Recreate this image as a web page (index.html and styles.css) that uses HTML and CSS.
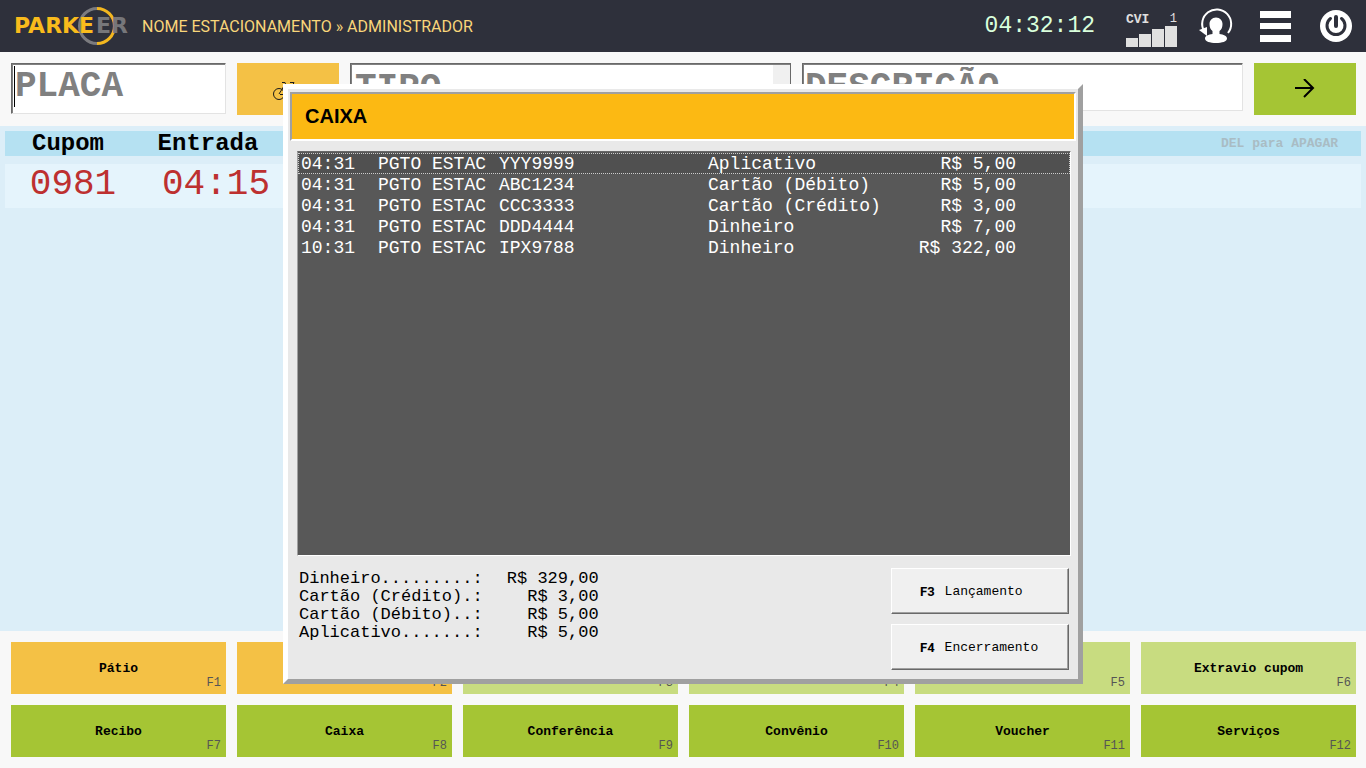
FILE: index.html
```html
<!DOCTYPE html>
<html lang="pt-BR">
<head>
<meta charset="utf-8">
<meta name="viewport" content="width=device-width, initial-scale=1">
<title>Parkeer - Caixa</title>
<link rel="stylesheet" href="styles.css">
</head>
<body>
<div class="app">
  <header class="topbar">
    <svg class="logo" width="120" height="40" viewBox="0 0 120 40" role="img" aria-label="Parkeer">
      <path class="ring-left" d="M85 2.500a17.500 17.500 0 0 0 0 35"/>
      <path class="ring-right" d="M85 2.500a17.500 17.500 0 0 1 0 35"/>
      <text class="logo-text" x="2" y="27">PARKE</text>
      <text class="logo-text logo-tail" x="84" y="27">ER</text>
    </svg>
    <h1 class="site">NOME ESTACIONAMENTO » ADMINISTRADOR</h1>
    <time class="clock">04:32:12</time>
    <div class="signal">
      <div class="signal-head"><b>CVI</b><span>1</span></div>
      <svg width="52" height="22" viewBox="0 0 52 22" aria-hidden="true"><path fill="#e0e0e0" d="M0 12h12v9H0zM13 8h12v13H13zM26 3h12v18H26zM39 0h12v21H39z"/></svg>
    </div>
    <button class="icon" aria-label="Trocar usuário">
      <svg width="34" height="36" viewBox="0 0 34 36"><path fill="none" stroke="#fff" stroke-width="2" d="M5 23A14.500 14.500 0 1 1 29 25"/><path fill="#fff" d="M0 22l8-3 0 9z"/><path fill="#fff" d="M17 9.500c4 0 6.500 3 6.500 6.500 0 3.500-1 5.500-3 7v3c4 .5 7.500 2 7.500 4.500 0 3-5 4.500-11 4.500S6 33.500 6 30.500C6 28 9.500 26.500 13.500 26v-3c-2-1.500-3-3.500-3-7 0-3.500 2.500-6.500 6.500-6.500z"/></svg>
    </button>
    <button class="icon" aria-label="Menu">
      <svg width="32" height="32" viewBox="0 0 32 32"><path fill="#fff" d="M0 1h31v7H0zM0 13h31v6H0zM0 25h31v7H0z"/></svg>
    </button>
    <button class="icon" aria-label="Sair">
      <svg width="32" height="32" viewBox="0 0 32 32"><circle cx="16" cy="16" r="16" fill="#fff"/><path fill="none" stroke="#2e303b" stroke-width="3" stroke-linecap="round" d="M10.500 8.500a9 9 0 1 0 11 0"/><path fill="none" stroke="#2e303b" stroke-width="4" stroke-linecap="round" d="M16 7v9"/></svg>
    </button>
  </header>

  <form class="entry">
    <input class="field plate" type="text" placeholder="PLACA" aria-label="Placa">
    <button class="tile amber" type="button" aria-label="Moto">
      <svg width="30" height="22" viewBox="0 0 30 22" fill="none" stroke="#1a1a1a"><circle cx="6" cy="16" r="5.500"/><circle cx="24" cy="16" r="5.500"/><path d="M6 16l5-8h9l4 8M9 4.500h3l4 12h-9M17 4.500h4l-2 4"/></svg>
    </button>
    <select class="field kind" aria-label="Tipo"><option>TIPO</option></select>
    <input class="field detail" type="text" placeholder="DESCRIÇÃO" aria-label="Descrição">
    <button class="tile green" type="button" aria-label="Confirmar">
      <svg width="20" height="20" viewBox="0 0 20 20" fill="none" stroke="#000" stroke-width="2"><path d="M0 9h18M9 0l9 9-9 9"/></svg>
    </button>
  </form>

  <main class="yard">
    <div class="yard-head"><b class="h-ticket">Cupom</b><b class="h-time">Entrada</b><span class="hint">DEL para APAGAR</span></div>
    <div class="yard-row"><span class="c-ticket">0981</span><span class="c-time">04:15</span></div>
  </main>

  <nav class="actions">
    <button class="tile amber">Pátio<kbd>F1</kbd></button>
    <button class="tile amber"><kbd>F2</kbd></button>
    <button class="tile light"><kbd>F3</kbd></button>
    <button class="tile light"><kbd>F4</kbd></button>
    <button class="tile light"><kbd>F5</kbd></button>
    <button class="tile light">Extravio cupom<kbd>F6</kbd></button>
    <button class="tile green">Recibo<kbd>F7</kbd></button>
    <button class="tile green">Caixa<kbd>F8</kbd></button>
    <button class="tile green">Conferência<kbd>F9</kbd></button>
    <button class="tile green">Convênio<kbd>F10</kbd></button>
    <button class="tile green">Voucher<kbd>F11</kbd></button>
    <button class="tile green">Serviços<kbd>F12</kbd></button>
  </nav>
</div>

<div class="overlay">
  <section class="dialog" role="dialog" aria-labelledby="dialog-title">
    <h2 class="caption" id="dialog-title">CAIXA</h2>
    <div class="list">
      <table class="moves" aria-label="Movimentos do caixa">
        <tbody>
          <tr class="current"><td class="m-time">04:31</td><td class="m-desc">PGTO ESTAC</td><td class="m-plate">YYY9999</td><td class="m-kind">Aplicativo</td><td class="m-value">R$ 5,00</td></tr>
          <tr><td>04:31</td><td>PGTO ESTAC</td><td>ABC1234</td><td>Cartão (Débito)</td><td class="m-value">R$ 5,00</td></tr>
          <tr><td>04:31</td><td>PGTO ESTAC</td><td>CCC3333</td><td>Cartão (Crédito)</td><td class="m-value">R$ 3,00</td></tr>
          <tr><td>04:31</td><td>PGTO ESTAC</td><td>DDD4444</td><td>Dinheiro</td><td class="m-value">R$ 7,00</td></tr>
          <tr><td>10:31</td><td>PGTO ESTAC</td><td>IPX9788</td><td>Dinheiro</td><td class="m-value">R$ 322,00</td></tr>
        </tbody>
      </table>
    </div>
    <div class="bottom">
      <dl class="totals">
        <dt>Dinheiro.........:</dt><dd>R$ 329,00</dd>
        <dt>Cartão (Crédito).:</dt><dd>R$ 3,00</dd>
        <dt>Cartão (Débito)..:</dt><dd>R$ 5,00</dd>
        <dt>Aplicativo.......:</dt><dd>R$ 5,00</dd>
      </dl>
      <div class="dialog-actions">
        <button class="push"><b>F3</b>Lançamento</button>
        <button class="push"><b>F4</b>Encerramento</button>
      </div>
    </div>
  </section>
</div>
</body>
</html>
```
FILE: styles.css
```css
* { box-sizing: border-box; }

body {
  margin: 0;
  font-family: "Liberation Mono", "Courier New", monospace;
  font-size: 13px;
  color: #000;
  background: #f8f8f8;
}

button, input, select { font: inherit; color: inherit; border-radius: 0; }

.app {
  display: flex;
  flex-direction: column;
  min-height: 100vh;
}

/* Top bar */
.topbar {
  display: flex;
  align-items: center;
  height: 52px;
  padding: 0 13px 0 12px;
  background: #2e303b;
}
.logo { flex: none; }
.ring-left, .ring-right { fill: none; stroke-width: 3; }
.ring-left { stroke: #7b7b7f; }
.ring-right { stroke: #f3b71f; }
.logo-text { font: bold 22px "DejaVu Sans", sans-serif; fill: #f9bb1c; }
.logo-tail { fill: #76767a; }
.site {
  flex: 1;
  margin: 0 0 0 10px;
  font: 400 16px Roboto, sans-serif;
  color: #f9d67a;
}
.clock { font-size: 23px; color: #d9ffdc; }
.signal { width: 52px; margin: 8px 21px 0 31px; color: #e0e0e0; }
.signal-head {
  display: flex;
  justify-content: space-between;
  padding-right: 1px;
  font-size: 12px;
  line-height: 13px;
}
.signal-head b { font-size: 13px; }
.signal svg { display: block; }
.icon {
  display: flex;
  justify-content: center;
  width: 34px;
  margin: 0 0 0 26px;
  padding: 0;
  border: 0;
  background: none;
}
.signal + .icon { margin-left: 0; }
.icon svg { flex: none; }

/* Entry form */
.entry {
  display: grid;
  grid-template-columns: 215px 102px 1fr 1fr 102px;
  gap: 11px;
  padding: 11px 10px 11px 11px;
}
.field {
  width: 100%;
  min-width: 0;
  height: 51px;
  padding: 0 2px 4px;
  font-size: 36px;
  font-weight: bold;
  color: #808080;
  background: #fff;
  border: 1px solid;
  border-color: #696969 #e3e3e3 #e3e3e3 #696969;
  box-shadow: inset 1px 1px #808080;
  outline: 0;
}
.field::placeholder { color: #808080; opacity: 1; }
/* Steady insertion bar of the active field */
.plate {
  padding-left: 3px;
  caret-color: transparent;
  background: linear-gradient(#000, #000) 2px 2px / 1px 41px no-repeat #fff;
}
.detail { height: 48px; padding: 1px 2px 0; }
.kind {
  appearance: none;
  padding: 0 4px;
  border-right-color: #696969;
  background: linear-gradient(#f0f0f0, #f0f0f0) right / 17px 100% no-repeat #fff;
}

.tile {
  position: relative;
  display: flex;
  align-items: center;
  justify-content: center;
  min-height: 52px;
  padding: 0;
  border: 0;
  font-weight: bold;
}
.tile kbd {
  position: absolute;
  right: 5px;
  bottom: 4px;
  font: 12px "Liberation Mono", monospace;
  color: #555;
}
.amber { background: #f4c145; }
.green { background: #a5c534; }
.light { background: #c8dc80; }

/* Parked vehicles */
.yard {
  flex: 1;
  padding: 5px;
  background: #dceef8;
}
.yard-head, .yard-row { display: flex; align-items: center; }
.yard-head { height: 25px; font-size: 24px; background: #b5e1f2; }
.yard-row {
  height: 44px;
  margin-top: 8px;
  padding-bottom: 4px;
  font-size: 36px;
  color: #bd3030;
  background: #e5f4fc;
}
.h-ticket, .c-ticket, .h-time, .c-time { text-align: center; }
.h-ticket { width: 126px; }
.h-time { width: 154px; }
.c-ticket { width: 136px; }
.c-time { width: 150px; }
.hint { margin: 0 23px 0 auto; font-size: 13px; font-weight: bold; color: #a9bcc4; }

/* Function keys */
.actions {
  display: grid;
  grid-template-columns: repeat(6, 1fr);
  gap: 11px;
  padding: 11px 10px 11px 11px;
}

/* Cash dialog */
.overlay {
  position: fixed;
  inset: 0;
  display: flex;
  align-items: center;
  justify-content: center;
}
.dialog {
  display: flex;
  flex-direction: column;
  width: 800px;
  max-width: 100%;
  min-height: 600px;
  border: 5px solid;
  border-color: #fff #a0a0a0 #a0a0a0 #fff;
  background: #e9e9e9;
}
.caption {
  margin: 3px 2px 0;
  padding: 11px 13px;
  font: bold 20px/23px "Liberation Sans", Arial, sans-serif;
  background: #fcb913;
  border: 2px solid;
  border-color: #a0a0a0 #fff #fff #a0a0a0;
}
.list {
  flex: 1;
  margin: 10px 7px 0 9px;
  padding: 1px 0;
  color: #fff;
  background: #585858;
  border: 1px solid;
  border-color: #696969 #fff #fff #a0a0a0;
}
.moves { width: 100%; border-collapse: collapse; table-layout: fixed; font-size: 18px; }
.moves td { height: 21px; padding: 0 0 0 3px; line-height: 20px; white-space: nowrap; }
.current { outline: 1px dotted #ccc; outline-offset: -1px; background: #505050; }
.m-time { width: 77px; }
.m-desc { width: 121px; }
.m-plate { width: 209px; }
.m-kind { width: 190px; }
.moves .m-value { padding-right: 54px; text-align: right; }

.bottom {
  display: flex;
  justify-content: space-between;
  padding: 12px 9px 9px 11px;
}
.totals {
  display: grid;
  grid-template-columns: auto 116px;
  align-content: start;
  margin: 2px 0 0;
  font-size: 17px;
  line-height: 18px;
}
.totals dd { margin: 0; text-align: right; }
.dialog-actions { display: grid; gap: 10px; width: 178px; }
.push {
  display: flex;
  align-items: center;
  gap: 10px;
  height: 46px;
  padding: 0 0 0 28px;
  background: #f0f0f0;
  border: 1px solid;
  border-color: #fff #696969 #696969 #fff;
  box-shadow: inset -1px -1px #a0a0a0;
}
.push b { font-family: Roboto, sans-serif; }
```
